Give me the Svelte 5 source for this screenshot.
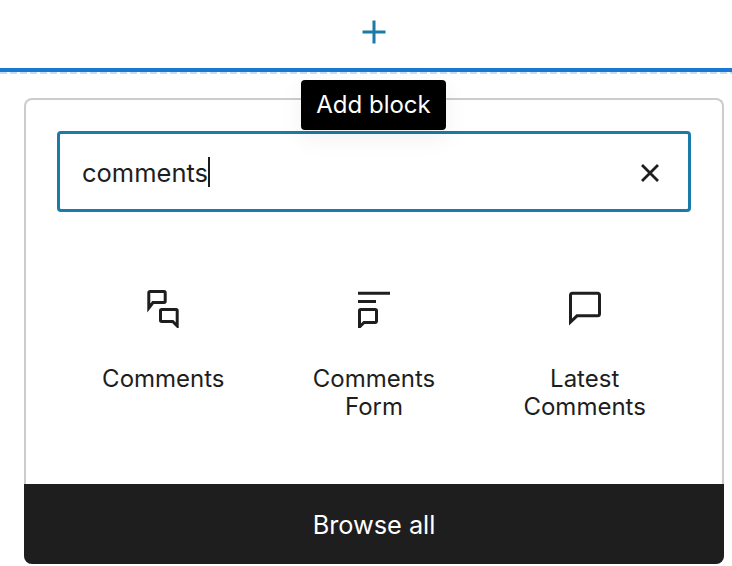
<script lang="ts">
	type Block = {
		label: string;
		icon: string;
	};

	const blocks: Array<Block> = [
		{
			label: 'Comments',
			icon: 'M7 3.500h14a1.200 1.200 0 0 1 1.200 1.200v8.600a1.200 1.200 0 0 1-1.200 1.200H10L5.800 20V4.700A1.200 1.200 0 0 1 7 3.500ZM18.700 21.500H33a1.200 1.200 0 0 1 1.200 1.200V38l-4.500-4.500H18.700a1.200 1.200 0 0 1-1.200-1.200v-9.600a1.200 1.200 0 0 1 1.200-1.200Z'
		},
		{
			label: 'Comments Form',
			icon: 'M4 5.300h32M4 13.500h18M6.700 21.500h14.600a1.200 1.200 0 0 1 1.200 1.200v10.600a1.200 1.200 0 0 1-1.200 1.200H10L5.500 39V22.700a1.200 1.200 0 0 1 1.200-1.200Z'
		},
		{
			label: 'Latest Comments',
			icon: 'M7.500 5.200h25a2 2 0 0 1 2 2v18.600a2 2 0 0 1-2 2H12L5.500 34V7.200a2 2 0 0 1 2-2Z'
		}
	];
</script>

<div class="page">
	<div class="inserter">
		<svg width="26" height="26" viewBox="0 0 26 26" aria-hidden="true">
			<path d="M13 1.500v23M1.500 13h23" />
		</svg>
	</div>
	<div class="line"></div>

	<div class="panel">
		<div class="tooltip">Add block</div>
		<div class="body">
			<div class="search">
				<span class="query">comments</span><span class="caret"></span>
				<svg class="clear" width="20" height="20" viewBox="0 0 20 20" aria-hidden="true">
					<path d="M2 2l16 16M18 2L2 18" />
				</svg>
			</div>
			<ul class="results">
				{#each blocks as block}
					<li>
						<svg class="icon" width="40" height="40" viewBox="0 0 40 40" aria-hidden="true">
							<path d={block.icon} />
						</svg>
						<span>{block.label}</span>
					</li>
				{/each}
			</ul>
		</div>
		<button class="browse">Browse all</button>
	</div>
</div>

<style>
	:global(body) {
		background: #fff;
	}

	.page {
		width: 732px;
		height: 566px;
		overflow: hidden;
		font-family: Inter, 'Liberation Sans', sans-serif;
		color: #1e1e1e;
	}

	.inserter {
		display: flex;
		justify-content: center;
		padding: 19px 0 0 15px;
		height: 49px;
	}

	.inserter path {
		fill: none;
		stroke: #1a7aa8;
		stroke-width: 3;
	}

	.line {
		height: 6px;
		background:
			linear-gradient(#1a78d0, #1a78d0) top / 100% 4px no-repeat,
			repeating-linear-gradient(90deg, #c4dff5 0 7px, transparent 7px 10px);
	}

	.panel {
		position: relative;
		display: flex;
		flex-direction: column;
		height: 466px;
		margin: 24px 8px 0 24px;
		box-sizing: border-box;
		border: 2px solid #ccc;
		border-bottom: 0;
		border-radius: 8px;
	}

	.tooltip {
		position: absolute;
		top: -20px;
		left: 275px;
		width: 145px;
		height: 50px;
		padding-bottom: 2px;
		box-sizing: border-box;
		display: flex;
		align-items: center;
		justify-content: center;
		border-radius: 4px;
		background: #000;
		color: #fff;
		font-size: 24px;
		box-shadow: 0 8px 24px rgba(0, 0, 0, 0.06);
	}

	.body {
		flex: 1;
		padding: 31px 31px 0;
	}

	.search {
		display: flex;
		align-items: center;
		height: 81px;
		box-sizing: border-box;
		padding: 0 28px 0 22px;
		border: 3px solid #1a7aa8;
		border-radius: 4px;
		font-size: 25.5px;
	}

	.query {
		padding-top: 2px;
	}

	.caret {
		width: 2px;
		height: 30px;
		background: #1e1e1e;
	}

	.clear {
		margin-left: auto;
		padding-top: 2px;
	}

	.clear path {
		fill: none;
		stroke: #1e1e1e;
		stroke-width: 2.800;
	}

	.results {
		display: grid;
		grid-template-columns: repeat(3, 1fr);
		margin: 0;
		padding: 76px 1px 0;
		list-style: none;
	}

	.results li {
		display: flex;
		flex-direction: column;
		align-items: center;
		padding: 0 40px;
		text-align: center;
		font-size: 24px;
		line-height: 28px;
	}

	.icon {
		margin-bottom: 37px;
	}

	.icon path {
		fill: none;
		stroke: #1e1e1e;
		stroke-width: 3;
	}

	.browse {
		flex: none;
		height: 80px;
		margin: 0 -2px;
		border: 0;
		border-radius: 0 0 8px 8px;
		background: #1e1e1e;
		color: #fff;
		font: inherit;
		font-size: 25.300px;
	}
</style>
